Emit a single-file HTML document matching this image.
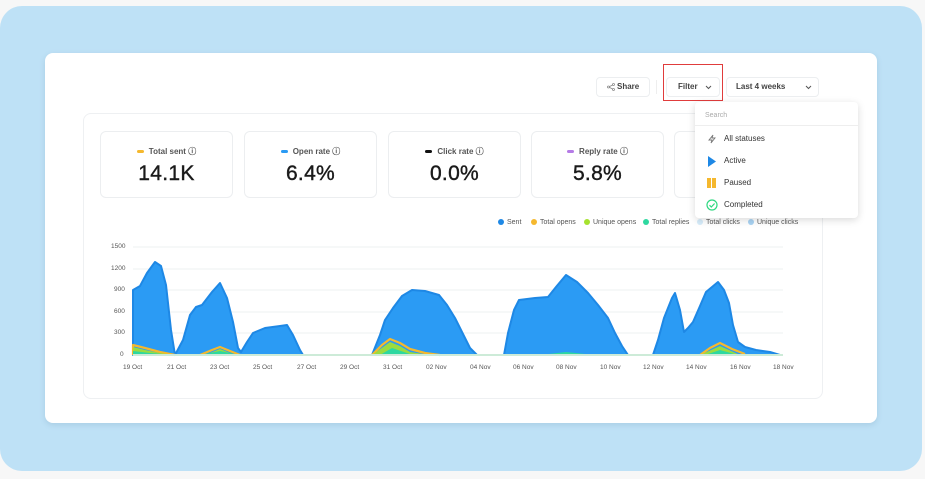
<!DOCTYPE html>
<html><head><style>
*{margin:0;padding:0;box-sizing:border-box}
body{width:925px;height:479px;background:#f7f7f7;font-family:"Liberation Sans",sans-serif;position:relative;overflow:hidden}
.blue{position:absolute;left:0;top:6px;width:922px;height:465px;background:#bee1f6;border-radius:22px}
.card{position:absolute;left:45px;top:53px;width:832px;height:370px;background:#fff;border-radius:8px;box-shadow:0 2px 6px rgba(80,120,150,.18)}
.panel{position:absolute;left:83px;top:113px;width:740px;height:286px;border:1px solid #eef0f2;border-radius:8px;background:#fff}
.stat{position:absolute;top:131px;width:133px;height:67px;border:1px solid #eceef0;border-radius:6px;background:#fff;text-align:center}
.stat .l{font-size:8px;color:#555;margin-top:14px;font-weight:bold}
.stat .l i{display:inline-block;width:7px;height:3px;border-radius:2px;vertical-align:middle;margin-right:5px}
.stat .v{font-size:21px;color:#1a1a1a;margin-top:5px;letter-spacing:.3px;-webkit-text-stroke:.4px #1a1a1a}
.btn{position:absolute;top:77px;height:20px;border:1px solid #eceef0;border-radius:4px;font-size:8px;font-weight:bold;color:#444;line-height:18px}
.dd{position:absolute;left:695px;top:102px;width:163px;height:116px;background:#fff;border-radius:4px;box-shadow:0 2px 8px rgba(0,0,0,.15)}
.dd .s{height:24px;border-bottom:1px solid #eee;font-size:7px;color:#aaa;padding:10px 0 0 10px}
.dd .it{height:22px;font-size:8px;color:#333;padding-left:29px;line-height:22px;position:relative}
.lg{position:absolute;top:219px;font-size:7px;color:#555}
.lg i{display:inline-block;width:6px;height:6px;border-radius:50%;margin-right:3px;vertical-align:-1px}
.ax{position:absolute;font-size:6.5px;color:#555}
</style></head><body>
<div class="blue"></div>
<div class="card"></div>
<div class="panel"></div>
<div class="btn" style="left:596px;width:54px;padding-left:20px">Share<svg style="position:absolute;left:10px;top:5px" width="8" height="8" viewBox="0 0 8 8" fill="none" stroke="#888" stroke-width=".8"><circle cx="1.5" cy="4" r="1"/><circle cx="6.5" cy="1.5" r="1"/><circle cx="6.5" cy="6.5" r="1"/><path d="M2.4 3.6 5.6 2M2.4 4.4 5.6 6"/></svg></div>
<div style="position:absolute;left:656px;top:80px;width:1px;height:14px;background:#eee"></div>
<div class="btn" style="left:666px;width:54px;padding-left:11px">Filter<svg style="position:absolute;left:38px;top:7px" width="7" height="5" viewBox="0 0 7 5" fill="none" stroke="#555" stroke-width="1"><path d="M1 1 3.5 3.5 6 1"/></svg></div>
<div style="position:absolute;left:663px;top:64px;width:60px;height:37px;border:1.5px solid #e03c3c"></div>
<div class="btn" style="left:726px;width:93px;padding-left:9px">Last 4 weeks<svg style="position:absolute;left:78px;top:7px" width="7" height="5" viewBox="0 0 7 5" fill="none" stroke="#555" stroke-width="1"><path d="M1 1 3.5 3.5 6 1"/></svg></div>

<div class="stat" style="left:100px"><div class="l"><i style="background:#f5b82e"></i>Total sent ⓘ</div><div class="v">14.1K</div></div>
<div class="stat" style="left:244px"><div class="l"><i style="background:#2b9bf4"></i>Open rate ⓘ</div><div class="v">6.4%</div></div>
<div class="stat" style="left:388px"><div class="l"><i style="background:#111"></i>Click rate ⓘ</div><div class="v">0.0%</div></div>
<div class="stat" style="left:531px"><div class="l"><i style="background:#b57be6"></i>Reply rate ⓘ</div><div class="v">5.8%</div></div>
<div class="stat" style="left:674px;width:40px;border-right:none"></div>

<div class="lg" style="left:498px"><i style="background:#1e88e5"></i>Sent</div>
<div class="lg" style="left:531px"><i style="background:#f5b82e"></i>Total opens</div>
<div class="lg" style="left:584px"><i style="background:#a6e22e"></i>Unique opens</div>
<div class="lg" style="left:643px"><i style="background:#2ed8a0"></i>Total replies</div>
<div class="lg" style="left:697px"><i style="background:#d6ecfa"></i>Total clicks</div>
<div class="lg" style="left:748px"><i style="background:#a9d3f3"></i>Unique clicks</div>

<div class="ax" style="left:111px;top:243px">1500</div>
<div class="ax" style="left:111px;top:265px">1200</div>
<div class="ax" style="left:114px;top:286px">900</div>
<div class="ax" style="left:114px;top:308px">600</div>
<div class="ax" style="left:114px;top:329px">300</div>
<div class="ax" style="left:120px;top:351px">0</div>

<svg style="position:absolute;left:0;top:0" width="925" height="479">
<g stroke="#eef0f2" stroke-width="1"><path d="M133 247H783M133 269H783M133 290H783M133 312H783M133 333H783"/></g>
<path d="M133 355L133 290L140 286L147 273L155 262L161 266L166 285L171 330L175 355L183 340L190 315L196 307L202 305L212 292L220 283L227 298L233 322L238 348L241 352L247 342L253 333L265 328L280 326L287 325L293 335L300 350L303 355L372 355L380 335L385 320L393 308L402 296L412 290L425 291L439 295L447 305L455 318L462 332L470 348L477 355L504 355L508 333L514 310L519 300L535 298L548 297L556 287L566 275L577 282L588 293L598 305L608 318L615 333L622 346L628 355L653 355L658 340L664 318L672 298L675 293L680 310L684 332L688 328L693 322L700 306L706 292L712 287L718 282L724 290L729 303L733 325L738 342L745 347L756 350L770 352L780 355Z" fill="#2b9bf4" stroke="#1e88e5" stroke-width="2" stroke-linejoin="round"/>
<path d="M133 355V345L145 348L160 352L175 355M200 355L212 350L220 347L230 351L240 355M372 355L382 345L390 339L400 343L410 349L425 353L440 355M700 355L710 348L720 343L732 349L745 354" fill="none" stroke="#f5b82e" stroke-width="2.2" stroke-linejoin="round"/>
<path d="M133 355V347L145 350L160 353L175 355Z M372 355L390 342L400 346L410 352L430 355Z M700 355L720 346L740 355Z M205 355L220 349L235 355Z" fill="#a6e22e" opacity=".9"/>
<path d="M133 355V351L150 353L175 355Z M200 355L220 351L240 355Z M380 355L392 348L410 354Z M540 355L566 352L595 355Z M705 355L720 350L738 355Z" fill="#2ed8a0"/>
<path d="M133 355H783" stroke="#cdebd8" stroke-width="2"/>
</svg>

<div class="ax" style="left:123px;top:364px">19 Oct</div>
<div class="ax" style="left:167px;top:364px">21 Oct</div>
<div class="ax" style="left:210px;top:364px">23 Oct</div>
<div class="ax" style="left:253px;top:364px">25 Oct</div>
<div class="ax" style="left:297px;top:364px">27 Oct</div>
<div class="ax" style="left:340px;top:364px">29 Oct</div>
<div class="ax" style="left:383px;top:364px">31 Oct</div>
<div class="ax" style="left:426px;top:364px">02 Nov</div>
<div class="ax" style="left:470px;top:364px">04 Nov</div>
<div class="ax" style="left:513px;top:364px">06 Nov</div>
<div class="ax" style="left:556px;top:364px">08 Nov</div>
<div class="ax" style="left:600px;top:364px">10 Nov</div>
<div class="ax" style="left:643px;top:364px">12 Nov</div>
<div class="ax" style="left:686px;top:364px">14 Nov</div>
<div class="ax" style="left:730px;top:364px">16 Nov</div>
<div class="ax" style="left:773px;top:364px">18 Nov</div>

<div class="dd">
<div class="s">Search</div>
<div class="it" style="margin-top:2px"><svg style="position:absolute;left:12px;top:6px" width="10" height="10" viewBox="0 0 10 10" fill="none" stroke="#777" stroke-width=".9"><path d="M6 1 2 6h3l-1 3 4-5H5z"/></svg>All statuses</div>
<div class="it"><svg style="position:absolute;left:12px;top:6px" width="10" height="11"><path d="M1 0 9 5.5 1 11Z" fill="#1e88e5"/></svg>Active</div>
<div class="it"><span style="position:absolute;left:12px;top:6px;width:4px;height:10px;background:#f5b82e"></span><span style="position:absolute;left:17px;top:6px;width:4px;height:10px;background:#f5b82e"></span>Paused</div>
<div class="it"><svg style="position:absolute;left:11px;top:5px" width="12" height="12" viewBox="0 0 12 12" fill="none" stroke="#2ed880" stroke-width="1.2"><circle cx="6" cy="6" r="5"/><path d="M3.5 6.2 5.3 8 8.6 4.5"/></svg>Completed</div>
</div>
</body></html>
